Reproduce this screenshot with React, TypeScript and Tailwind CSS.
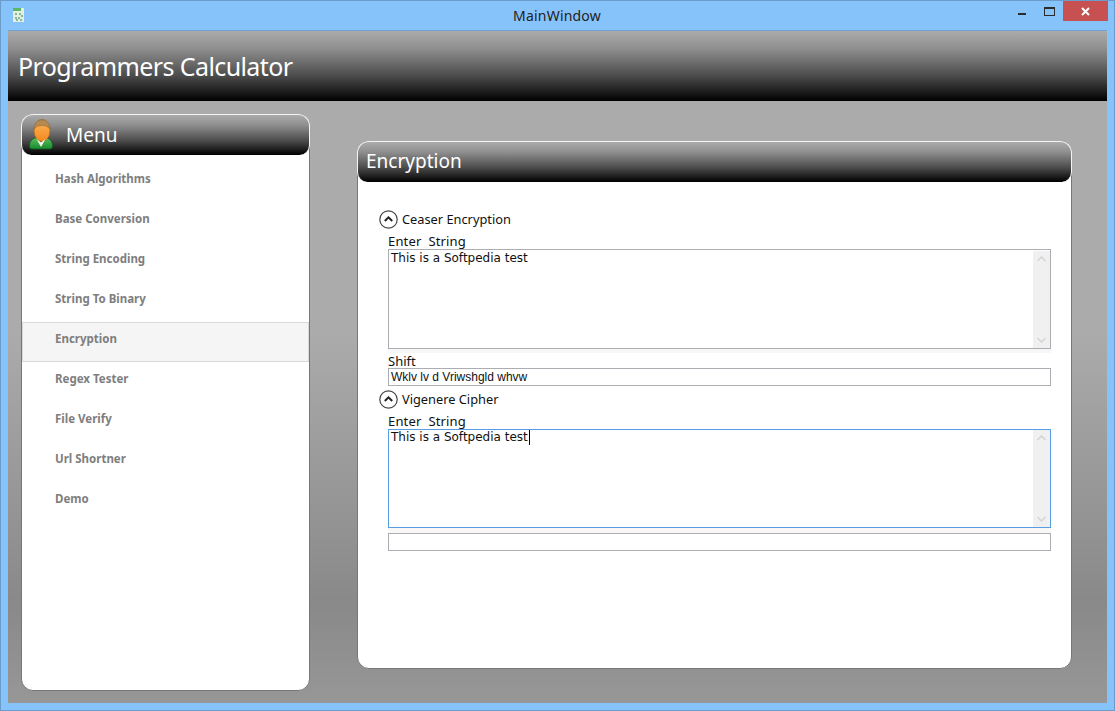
const menu = ["Hash Algorithms", "Base Conversion", "String Encoding", "String To Binary", "Encryption", "Regex Tester", "File Verify", "Url Shortner", "Demo"];

const headerBg = "bg-[linear-gradient(180deg,#ababab_0%,#8f8f8f_25%,#4a4a4a_65%,#000_100%)]";
const uiFont = "font-['Noto_Sans','Open_Sans',sans-serif]";

function Chevron() {
  return (
    <svg width="19" height="19" viewBox="0 0 19 19" className="shrink-0" fill="none">
      <circle cx="9.5" cy="9.5" r="8.7" stroke="#444" strokeWidth="1.2" fill="#fff" />
      <path d="M5.8 11 9.5 7.4 13.2 11" stroke="#222" strokeWidth="2" />
    </svg>
  );
}

function Person() {
  return (
    <svg width="24" height="32" viewBox="0 0 24 32" className="shrink-0">
      <defs>
        <linearGradient id="face" x1="0" y1="0" x2="0" y2="1">
          <stop offset="0" stopColor="#ffb35a" />
          <stop offset="1" stopColor="#f28a1e" />
        </linearGradient>
        <linearGradient id="shirt" x1="0" y1="0" x2="0" y2="1">
          <stop offset="0" stopColor="#5cc05e" />
          <stop offset="1" stopColor="#178a2e" />
        </linearGradient>
      </defs>
      <path d="M.5 27c0-5 2.500-7 7-8.500l4.500 4.500 4.500-4.500c4.500 1.500 7 3.500 7 8.500 0 2-1 3-2.500 3h-18C1.500 30 .5 29 .5 27z" fill="url(#shirt)" stroke="#0f5c20" strokeWidth="0.7" />
      <ellipse cx="13" cy="11.500" rx="8" ry="11" fill="url(#face)" stroke="#a5651c" strokeWidth="0.7" />
      <path d="M7.500 20l4.500 8 4.500-8-4.500 3.500z" fill="#f2f7ee" />
      <path d="M5.200 10C5.300 4 8.500.8 13 .8S20.700 4 20.800 10C19 7.500 16.500 6.500 13 6.500S7 7.500 5.200 10z" fill="#b58a52" stroke="#7d5a2c" strokeWidth="0.4" />
    </svg>
  );
}

function Field({ text, focused }: { text: string; focused?: boolean }) {
  return (
    <div className={`flex w-[663px] border bg-white ${focused ? "h-[99px] border-[#569de5]" : "h-[100px] border-[#abadb3] pt-px"}`}>
      <div className="flex-1 pl-[2px] font-['DejaVu_Sans',sans-serif] text-[12px] leading-[15px] text-[#111]">
        {text}
        {focused && <span className="ml-px inline-block h-[15px] w-px bg-black align-top" />}
      </div>
      <div className="flex w-[17px] flex-col items-center justify-between bg-[#f0f0f0] py-[5px]">
        <svg width="9" height="6" viewBox="0 0 9 6" fill="none"><path d="M.5 5 4.500 1l4 4" stroke="#d4d4d4" strokeWidth="1.500" /></svg>
        <svg width="9" height="6" viewBox="0 0 9 6" fill="none"><path d="M.5 1l4 4 4-4" stroke="#d4d4d4" strokeWidth="1.500" /></svg>
      </div>
    </div>
  );
}

function Line({ text }: { text?: string }) {
  return (
    <div className="h-[18px] w-[663px] border border-[#abadb3] bg-white pl-[2px] font-['Liberation_Sans',sans-serif] text-[12px] leading-[16px] text-[#111]">
      {text}
    </div>
  );
}

function Expander({ title }: { title: string }) {
  return (
    <div className="flex h-5 items-center gap-1 pl-[21px] text-[12.800px] text-[#111]">
      <Chevron />
      <span className="translate-y-px">{title}</span>
    </div>
  );
}

export default function App() {
  return (
    <div className={`flex h-[711px] w-[1115px] flex-col overflow-hidden border border-[#6a9bc9] bg-[#87c3fb] ${uiFont}`}>
      <div className="flex h-[29px] shrink-0 items-start">
        <svg width="11" height="14" viewBox="0 0 11 14" className="ml-[12px] mt-[7px] shrink-0">
          <rect width="11" height="14" fill="#e3efe0" />
          <rect width="8" height="3" fill="#5cb765" />
          <path d="M2 5h2v2H2zM6 5h2v2H6zM8 7h2v2H8zM2 9h2v2H2zM5 9h2v2H5zM7 11h2v2H7zM3 11h2v2H3z" fill="#8cb89a" />
        </svg>
        <div className="flex-1 pt-[6px] pl-[72px] text-center text-[14px] leading-[18px] tracking-[0.2px] text-[#222]">MainWindow</div>
        <div className="mr-[18px] mt-[12px] h-[2px] w-2 bg-[#2b2b2b]" />
        <div className="mr-2 mt-[6px] h-[9px] w-[11px] border border-t-2 border-[#2b2b2b]" />
        <div className="mr-[6px] flex h-5 w-[45px] items-center justify-center bg-[#c75050]">
          <svg width="9" height="9" viewBox="0 0 9 9"><path d="M1 1l7 7M8 1 1 8" stroke="#fff" strokeWidth="2" /></svg>
        </div>
      </div>

      <div className="mx-[7px] mb-[7px] flex flex-1 flex-col border-t border-[#6fa3d6] bg-[linear-gradient(180deg,#ababab_0%,#ababab_45%,#898989_85%,#979797_100%)]">
        <div className={`flex h-[70px] shrink-0 items-center pl-[10px] pt-[2px] text-[25px] tracking-[-0.6px] text-white ${headerBg}`}>
          Programmers Calculator
        </div>

        <div className="flex flex-1 pl-[13px]">
          <div className="mt-[13px] h-[577px] w-[289px] rounded-[12px] border border-[#777] bg-white">
            <div className={`-mx-px -mt-px flex h-[41px] items-center rounded-t-[12px] rounded-b-[10px] border border-b-0 border-[#f4f4f4] pl-[7px] text-[19px] text-white ${headerBg}`}>
              <Person />
              <span className="ml-[13px]">Menu</span>
            </div>
            <div className="mt-[4px] flex flex-col">
              {menu.map((item) =>
                item === "Encryption" ? (
                  <div key={item} className="-mb-[3px] mt-[3px] flex h-[40px] items-start border border-[#d9d9d9] bg-[#f5f5f5] pl-[32px] pt-[7px] text-[11.500px] font-bold leading-[18px] text-[#7e7e7e]">
                    {item}
                  </div>
                ) : (
                  <div key={item} className="flex h-10 items-center pl-[33px] text-[11.500px] font-bold text-[#7e7e7e]">
                    {item}
                  </div>
                ),
              )}
            </div>
          </div>

          <div className="ml-[47px] mt-[40px] h-[528px] w-[715px] rounded-[12px] border border-[#777] bg-white">
            <div className={`-mx-px -mt-px flex h-[41px] items-center rounded-t-[12px] rounded-b-[10px] border border-b-0 border-[#f4f4f4] pb-[2px] pl-[8px] text-[19px] text-white ${headerBg}`}>
              Encryption
            </div>
            <div className="pt-[27px]">
              <Expander title="Ceaser Encryption" />
              <div className="pl-[30px]">
                <div className="mt-[6px] h-[14px] text-[13px] leading-[12px] tracking-[0.15px] text-[#111]">Enter&nbsp; String</div>
                <Field text="This is a Softpedia test" />
                <div className="h-[4px] w-[663px] bg-[#f8f7f7]" />
                <div className="h-[15px] text-[13px] leading-[16px] text-[#111]">Shift</div>
                <Line text="Wklv lv d Vriwshgld whvw" />
              </div>
              <div className="mt-[3px]"><Expander title="Vigenere Cipher" /></div>
              <div className="pl-[30px]">
                <div className="mt-[5px] h-[15px] text-[13px] leading-[14px] tracking-[0.15px] text-[#111]">Enter&nbsp; String</div>
                <Field text="This is a Softpedia test" focused />
                <div className="h-[5px] w-[663px] bg-[#faf7f7]" />
                <Line />
              </div>
            </div>
          </div>
        </div>
      </div>
    </div>
  );
}
